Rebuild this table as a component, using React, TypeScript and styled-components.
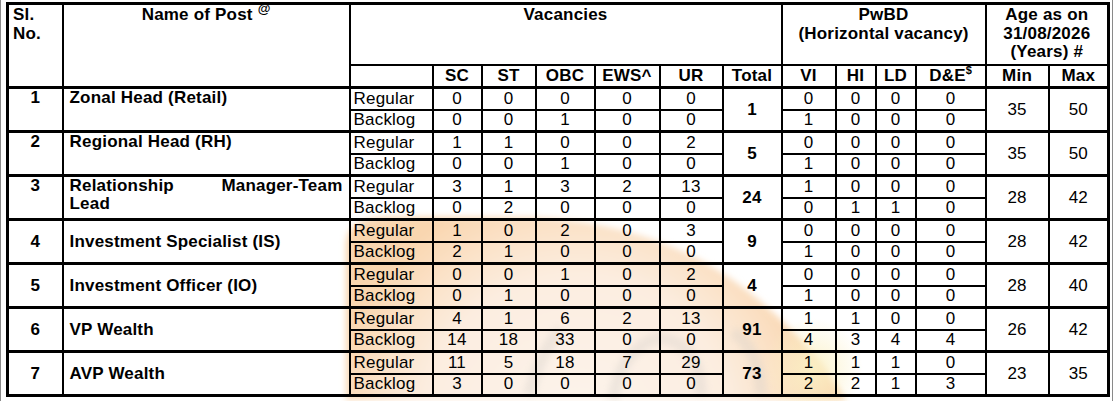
import React from 'react';
import styled, { createGlobalStyle } from 'styled-components';

const Global = createGlobalStyle`
  html, body { margin: 0; padding: 0; background: #fff; }
  body { font-family: "Liberation Sans", Arial, sans-serif; }
`;

const Page = styled.div`
  position: relative;
  width: 1113px;
  height: 401px;
  box-sizing: border-box;
  border-left: 1px solid #8a8a8a;
  border-right: 1px solid #8a8a8a;
  padding: 2px 0 0 5px;
  overflow: hidden;
`;

const Watermark = styled.svg`
  position: absolute;
  left: 0;
  top: 0;
  z-index: 0;
  pointer-events: none;
`;

const Table = styled.table`
  position: relative;
  z-index: 1;
  border-collapse: collapse;
  table-layout: fixed;
  width: 1101px;
  font-size: 17px;
  letter-spacing: 0.2px;
  line-height: 18px;
  color: #000;
  border: 3px solid #000;
`;

type CellProps = {
  $align?: 'left' | 'center';
  $valign?: 'top' | 'middle';
  $bold?: boolean;
  $thick?: boolean;
  $pad?: number;
};

const Cell = styled.td<CellProps>`
  border: 2px solid #000;
  border-top-width: ${(p) => (p.$thick ? '3px' : '2px')};
  padding: 0 ${(p) => (p.$pad ?? 2)}px;
  text-align: ${(p) => p.$align ?? 'center'};
  vertical-align: ${(p) => p.$valign ?? 'middle'};
  font-weight: ${(p) => (p.$bold ? 700 : 400)};
  white-space: nowrap;
  overflow: hidden;
`;

const Head = styled.th<CellProps>`
  border: 2px solid #000;
  border-bottom-width: ${(p) => (p.$thick ? '3px' : '2px')};
  padding: 1px ${(p) => (p.$pad ?? 2)}px 0;
  text-align: ${(p) => p.$align ?? 'center'};
  vertical-align: ${(p) => p.$valign ?? 'top'};
  font-weight: 700;
  line-height: 18.5px;
`;

const TopRow = styled.tr`
  height: 61px;
`;

const SubRow = styled.tr`
  height: 23px;
`;

const DataRow = styled.tr`
  height: 22px;
`;

const Sup = styled.sup<{ $size: number }>`
  font-size: ${(p) => p.$size}px;
  line-height: 0;
  vertical-align: 7px;
  letter-spacing: 0;
`;

const Name = styled.div`
  white-space: normal;
  text-align: justify;
  text-align-last: justify;
`;

type Post = {
  no: number;
  name: React.ReactNode;
  valign: 'top' | 'middle';
  reg: number[];
  back: number[];
  total: number;
  pwReg: number[];
  pwBack: number[];
  min: number;
  max: number;
};

const posts: Post[] = [
  { no: 1, name: 'Zonal Head (Retail)', valign: 'top', reg: [0, 0, 0, 0, 0], back: [0, 0, 1, 0, 0], total: 1, pwReg: [0, 0, 0, 0], pwBack: [1, 0, 0, 0], min: 35, max: 50 },
  { no: 2, name: 'Regional Head (RH)', valign: 'top', reg: [1, 1, 0, 0, 2], back: [0, 0, 1, 0, 0], total: 5, pwReg: [0, 0, 0, 0], pwBack: [1, 0, 0, 0], min: 35, max: 50 },
  {
    no: 3,
    name: (
      <Name>
        Relationship Manager-Team
        <br />
        Lead
      </Name>
    ),
    valign: 'top',
    reg: [3, 1, 3, 2, 13],
    back: [0, 2, 0, 0, 0],
    total: 24,
    pwReg: [1, 0, 0, 0],
    pwBack: [0, 1, 1, 0],
    min: 28,
    max: 42,
  },
  { no: 4, name: 'Investment Specialist (IS)', valign: 'middle', reg: [1, 0, 2, 0, 3], back: [2, 1, 0, 0, 0], total: 9, pwReg: [0, 0, 0, 0], pwBack: [1, 0, 0, 0], min: 28, max: 42 },
  { no: 5, name: 'Investment Officer (IO)', valign: 'middle', reg: [0, 0, 1, 0, 2], back: [0, 1, 0, 0, 0], total: 4, pwReg: [0, 0, 0, 0], pwBack: [1, 0, 0, 0], min: 28, max: 40 },
  { no: 6, name: 'VP Wealth', valign: 'middle', reg: [4, 1, 6, 2, 13], back: [14, 18, 33, 0, 0], total: 91, pwReg: [1, 1, 0, 0], pwBack: [4, 3, 4, 4], min: 26, max: 42 },
  { no: 7, name: 'AVP Wealth', valign: 'middle', reg: [11, 5, 18, 7, 29], back: [3, 0, 0, 0, 0], total: 73, pwReg: [1, 1, 1, 0], pwBack: [2, 2, 1, 3], min: 23, max: 35 },
];

const colWidths = [55, 287, 83, 49, 54, 59, 65, 63, 59, 54, 40, 40, 70, 63, 60];

function PostRows({ p }: { p: Post }) {
  return (
    <>
      <DataRow>
        <Cell rowSpan={2} $bold $thick $valign={p.valign}>
          {p.no}
        </Cell>
        <Cell rowSpan={2} $bold $thick $align="left" $pad={6} $valign={p.valign}>
          {p.name}
        </Cell>
        <Cell $thick $align="left" $pad={3}>
          Regular
        </Cell>
        {p.reg.map((v, i) => (
          <Cell key={i} $thick>
            {v}
          </Cell>
        ))}
        <Cell rowSpan={2} $bold $thick>
          {p.total}
        </Cell>
        {p.pwReg.map((v, i) => (
          <Cell key={i} $thick>
            {v}
          </Cell>
        ))}
        <Cell rowSpan={2} $thick>
          {p.min}
        </Cell>
        <Cell rowSpan={2} $thick>
          {p.max}
        </Cell>
      </DataRow>
      <DataRow>
        <Cell $align="left" $pad={3}>
          Backlog
        </Cell>
        {p.back.map((v, i) => (
          <Cell key={i}>{v}</Cell>
        ))}
        {p.pwBack.map((v, i) => (
          <Cell key={i}>{v}</Cell>
        ))}
      </DataRow>
    </>
  );
}

export default function App() {
  return (
    <>
      <Global />
      <Page>
        <Watermark width={1113} height={401} viewBox="0 0 1113 401">
          <defs>
            <radialGradient id="disc" gradientUnits="userSpaceOnUse" cx="575" cy="430" r="250">
              <stop offset="0" stopColor="#fdf5ec" />
              <stop offset="0.62" stopColor="#fcede0" />
              <stop offset="0.8" stopColor="#fbe3ca" />
              <stop offset="1" stopColor="#f9d6af" />
            </radialGradient>
            <radialGradient id="yel" cx="0.5" cy="0.5" r="0.5">
              <stop offset="0" stopColor="#fbf1c6" stopOpacity="0.9" />
              <stop offset="1" stopColor="#fbf1c6" stopOpacity="0" />
            </radialGradient>
            <filter id="soft" x="-20%" y="-20%" width="140%" height="140%">
              <feGaussianBlur stdDeviation="3" />
            </filter>
          </defs>
          <path
            d="M345 400 L345 245 Q345 217 390 217 L530 217 Q640 222 720 272 Q800 325 845 400 Z"
            fill="url(#disc)"
            filter="url(#soft)"
          />
          <ellipse cx="812" cy="368" rx="50" ry="50" fill="url(#yel)" />
          <g fill="none" stroke="#d6d0ca" strokeWidth="12" opacity="0.35" filter="url(#soft)">
            <path d="M528 395 Q540 350 560 330" />
            <path d="M612 400 Q620 348 658 338 Q698 342 700 395" />
            <path d="M732 332 Q758 348 760 395" />
          </g>
        </Watermark>
        <Table>
          <colgroup>
            {colWidths.map((w, i) => (
              <col key={i} style={{ width: w }} />
            ))}
          </colgroup>
          <thead>
            <TopRow>
              <Head rowSpan={2} $align="left" $pad={4} $thick>
                Sl.
                <br />
                No.
              </Head>
              <Head rowSpan={2} $thick>
                Name of Post <Sup $size={13}>@</Sup>
              </Head>
              <Head colSpan={7}>Vacancies</Head>
              <Head colSpan={4}>
                PwBD
                <br />
                (Horizontal vacancy)
              </Head>
              <Head colSpan={2}>
                Age as on
                <br />
                31/08/2026
                <br />
                (Years) #
              </Head>
            </TopRow>
            <SubRow>
              <Head $valign="middle" $thick />
              <Head $valign="middle" $thick>SC</Head>
              <Head $valign="middle" $thick>ST</Head>
              <Head $valign="middle" $thick>OBC</Head>
              <Head $valign="middle" $thick>EWS^</Head>
              <Head $valign="middle" $thick>UR</Head>
              <Head $valign="middle" $thick>Total</Head>
              <Head $valign="middle" $thick>VI</Head>
              <Head $valign="middle" $thick>HI</Head>
              <Head $valign="middle" $thick>LD</Head>
              <Head $valign="middle" $thick>
                D&amp;E<Sup $size={11}>$</Sup>
              </Head>
              <Head $valign="middle" $thick>Min</Head>
              <Head $valign="middle" $thick>Max</Head>
            </SubRow>
          </thead>
          <tbody>
            {posts.map((p) => (
              <PostRows key={p.no} p={p} />
            ))}
          </tbody>
        </Table>
      </Page>
    </>
  );
}
